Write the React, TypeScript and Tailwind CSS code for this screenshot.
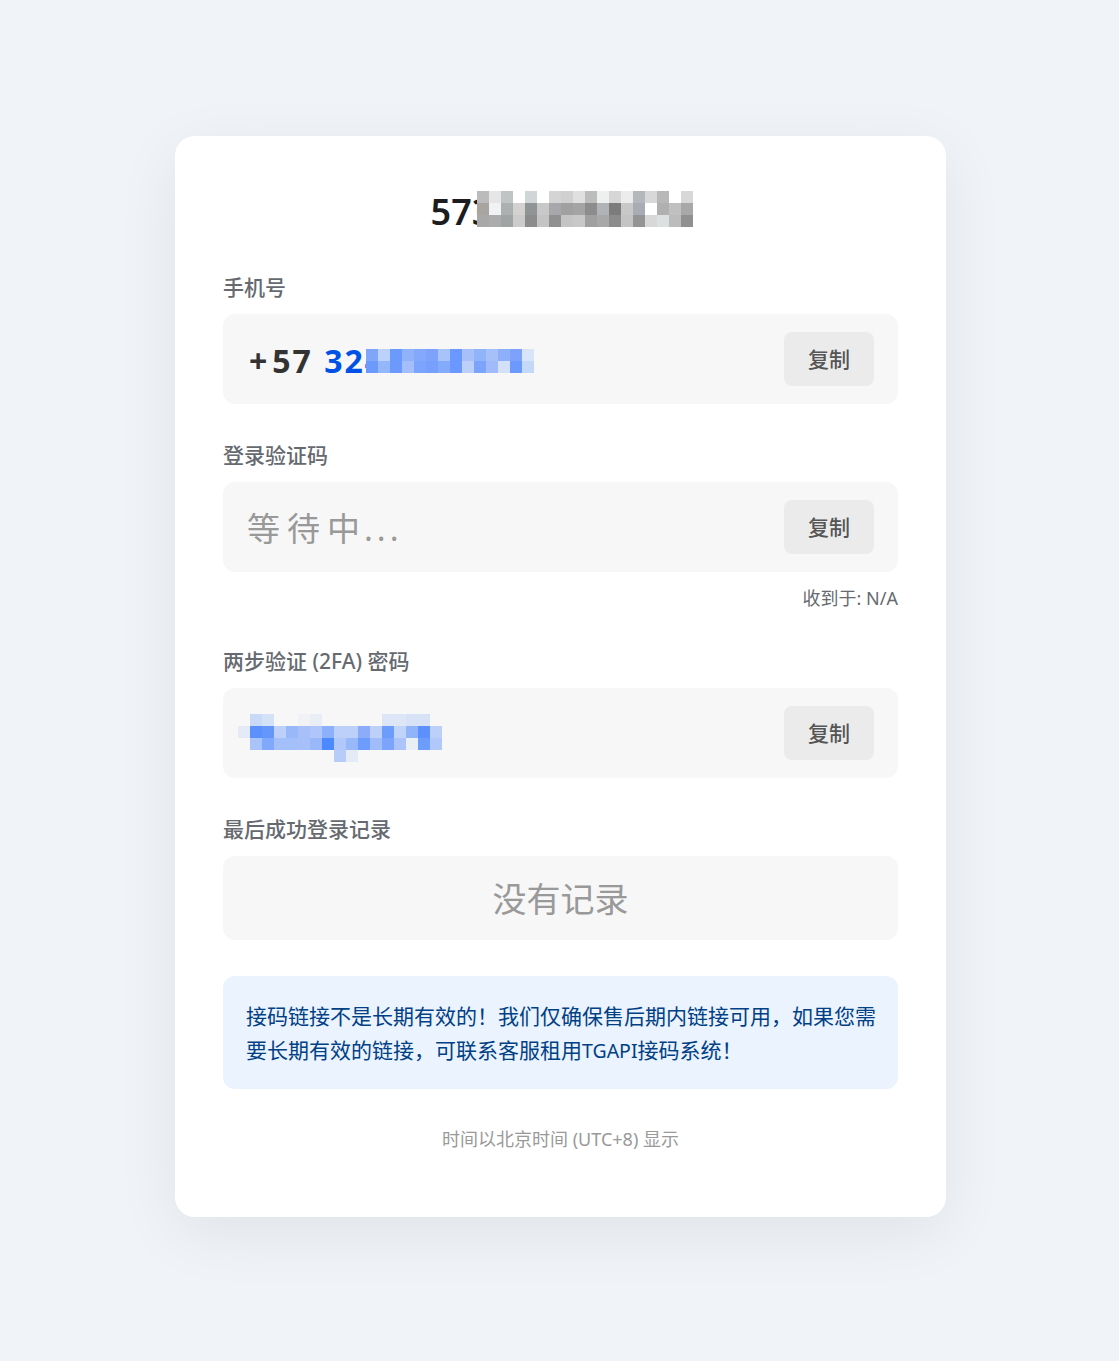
const titleMosaic = [
  ['#bbb', '#e6e6e6', '#c0c4c4', '#fff', '#d0d6d6', '#fff', '#d4d4d4', '#d0d0d0', '#e0e0e0', '#bcbcbc', '#eef0f0', '#d6d6d6', '#ececec', '#b4b8bc', '#d8d8d8', '#b8b8b8', '#fff', '#d8d8d8'],
  ['#a8a4a0', '#f0f2f4', '#acb0b0', '#d4d2d0', '#909494', '#c8c8c8', '#a8a8ac', '#a0a0a0', '#a4a4a4', '#8c8c8c', '#b0b4b8', '#7c7c7c', '#c8c8c8', '#a8acb4', '#fff', '#b0b0b0', '#c0c0c0', '#a8a8a8'],
  ['#a8a8a8', '#acacac', '#a0a4a4', '#ccc', '#8c8c8c', '#c4c4c4', '#909090', '#c4c4c4', '#c8c8c8', '#a0a0a0', '#a8a8a8', '#8c8c8c', '#c4c4c4', '#949494', '#d8d8d8', '#dce0e0', '#bcbcbc', '#909090'],
]

const phoneMosaic = [
  ['#80a6fa', '#bcd2fa', '#6c9afc', '#90b2fa', '#84a8fc', '#7ca2fc', '#a8c2fa', '#6a98fe', '#a8c0fa', '#90b4fa', '#a8c0fa', '#8eb0fa', '#7ca2fc', '#d8e4f8'],
  ['#6c9afc', '#94b6fa', '#6c9afc', '#a4befa', '#7ca4fc', '#76a0fc', '#84aafc', '#6a98fe', '#bcd0fa', '#7ca4fc', '#a0bafa', '#d4e0f8', '#6c9afc', '#c4d8f8'],
]

const f = '#f7f7f7'
const secretMosaic = [
  [f, '#c8daf8', '#d4e2f8', f, f, '#f0f2f6', '#e8edf6', f, f, f, f, f, '#dde6f6', '#dde6f6', '#d8e2f6', '#d8e2f6', f, f],
  ['#e4eaf6', '#5c90fc', '#6496fc', '#bcd0fa', '#98b8fa', '#a8c0fa', '#b0c6fa', '#8cb0fa', '#bcd0fa', '#bcd0fa', '#8cacfa', '#bcd0fa', '#6c9cfc', '#c0d4fa', '#90b4fa', '#5c90fc', '#bcd0fa', f],
  [f, '#a8c4fa', '#80a8fc', '#a4c0fa', '#a4c0fa', '#a8c0fa', '#98b8fa', '#4c88fe', '#b0c8fa', '#98b8fa', '#6c9cfc', '#a0bcfa', '#7ca4fc', '#acc4fa', '#eaeff6', '#6c9cfc', '#b0c8fa', f],
  [f, f, f, f, f, f, f, f, '#b8ccfa', '#e4eaf6', f, f, f, f, f, f, f, f],
]

function Mosaic({ rows, className }: { rows: string[][]; className?: string }) {
  return (
    <svg
      width={rows[0].length * 12}
      height={rows.length * 12}
      shapeRendering="crispEdges"
      className={className}
    >
      {rows.map((row, y) =>
        row.map((color, x) => (
          <rect key={`${x}-${y}`} x={x * 12} y={y * 12} width="12" height="12" fill={color} />
        ))
      )}
    </svg>
  )
}

function FieldLabel({ children }: { children: React.ReactNode }) {
  return <div className="text-[21px] leading-[26px] font-medium text-[#666a70]">{children}</div>
}

function CopyButton() {
  return (
    <button className="w-[90px] h-[54px] shrink-0 rounded-lg bg-[#ebebeb] pt-[2px] text-[21px] font-medium text-[#555]">
      复制
    </button>
  )
}

export default function App() {
  return (
    <div
      className="min-h-[1361px] bg-[#f0f4f8] pt-[136px] pl-[175px] font-['Noto_Sans','Noto_Sans_CJK_SC',sans-serif]"
    >
      <div className="w-[771px] h-[1081px] rounded-[20px] bg-white px-12 pt-[48px] shadow-[0_16px_64px_rgba(0,0,0,0.07)]">
        <div className="flex h-[54px] items-center justify-center pl-[3px] pt-[2px]">
          <span className="text-[36px] leading-none font-semibold text-[#1d1d1f]">573</span>
          <Mosaic rows={titleMosaic} className="relative -mt-[7px] -ml-[15px]" />
        </div>

        <div className="mt-[36px]">
          <FieldLabel>手机号</FieldLabel>
          <div className="mt-[14px] flex h-[90px] items-center justify-between rounded-xl bg-[#f7f7f7] pl-[26px] pr-6">
            <div className="flex items-center whitespace-nowrap pt-[3px] text-[32px] font-bold tracking-[2px]">
              <span className="mr-[3px] text-[#333]">+</span>
              <span className="text-[#333]">57&nbsp;</span>
              <span className="ml-[1px] text-[#0052e6]">324</span>
              <Mosaic rows={phoneMosaic} className="relative mt-[1px] -ml-[19px]" />
            </div>
            <CopyButton />
          </div>
        </div>

        <div className="mt-[38px]">
          <FieldLabel>登录验证码</FieldLabel>
          <div className="mt-[14px] flex h-[90px] items-center justify-between rounded-xl bg-[#f7f7f7] pl-6 pr-6">
            <div className="pt-[3px] text-[33px] tracking-[7px] text-[#999]">
              等待中<span className="-ml-[3px] tracking-[4px]">...</span>
            </div>
            <CopyButton />
          </div>
          <div className="mt-[14px] text-right text-[18px] leading-[25px] text-[#666a70]">收到于: N/A</div>
        </div>

        <div className="mt-[37px]">
          <FieldLabel>两步验证 (2FA) 密码</FieldLabel>
          <div className="mt-[14px] flex h-[90px] items-center justify-between rounded-xl bg-[#f7f7f7] pl-[15px] pr-6">
            <Mosaic rows={secretMosaic} className="mt-[10px]" />
            <CopyButton />
          </div>
        </div>

        <div className="mt-[38px]">
          <FieldLabel>最后成功登录记录</FieldLabel>
          <div className="mt-[14px] flex h-[84px] items-center justify-center rounded-xl bg-[#f7f7f7] pt-[2px] text-[34px] text-[#999]">
            没有记录
          </div>
        </div>

        <div className="mt-[36px] h-[113px] rounded-xl bg-[#ebf3fe] pl-[23px] pr-[20px] pt-[23px] text-[21px] leading-[34px] text-[#004085]">
          接码链接不是长期有效的！我们仅确保售后期内链接可用，如果您需要长期有效的链接，可联系客服租用<span className="text-[19.5px]">TGAPI</span>接码系统！
        </div>

        <div className="mt-[37px] text-center text-[18px] leading-[26px] text-[#999]">
          时间以北京时间 (UTC+8) 显示
        </div>
      </div>
    </div>
  )
}
